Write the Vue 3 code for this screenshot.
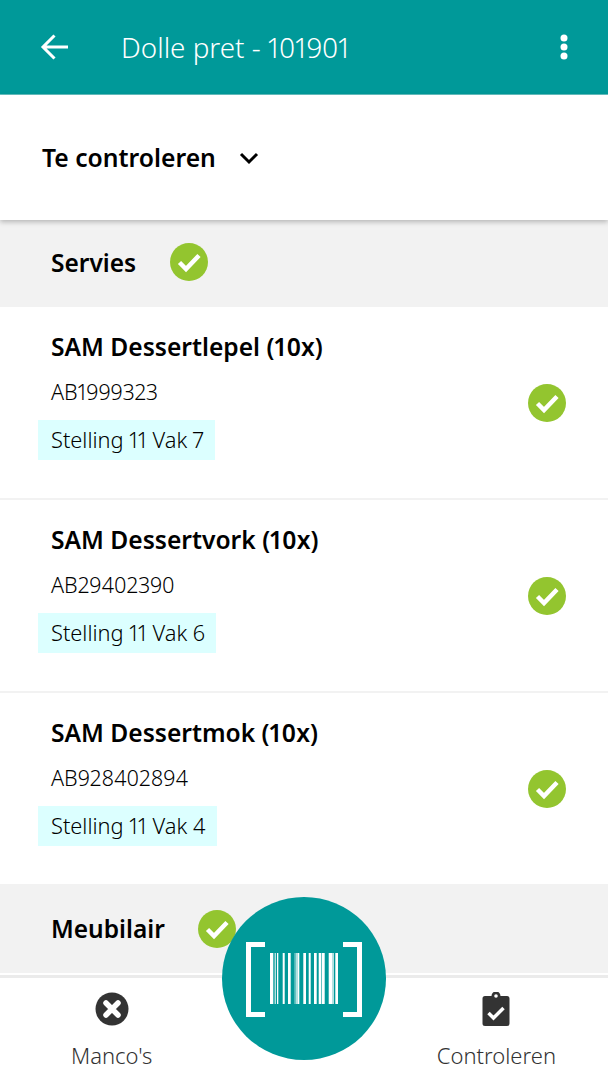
<template>
  <div class="screen">
    <header class="app-bar">
      <svg class="back-icon" width="30" height="30" viewBox="0 0 30 30">
        <path d="M28 15H3M14.500 3.500 3 15l11.500 11.500" fill="none" stroke="#fff" stroke-width="3" />
      </svg>
      <h1 class="app-title">Dolle pret - 101901</h1>
      <svg class="more-icon" width="10" height="26" viewBox="0 0 10 26">
        <circle cx="5" cy="4" r="3.500" fill="#fff" />
        <circle cx="5" cy="13" r="3.500" fill="#fff" />
        <circle cx="5" cy="22" r="3.500" fill="#fff" />
      </svg>
    </header>

    <div class="filter-row">
      <span class="filter-label">Te controleren</span>
      <svg width="20" height="14" viewBox="0 0 20 14">
        <path d="M2 3l8 8 8-8" fill="none" stroke="#000" stroke-width="3" />
      </svg>
    </div>

    <main class="list">
      <div class="section-head">
        <span class="section-title">Servies</span>
        <svg class="check" viewBox="0 0 38 38">
          <circle cx="19" cy="19" r="19" fill="#93c52f" />
          <path d="M9.500 19.500l6.500 6.500 13-13.500" fill="none" stroke="#fff" stroke-width="4.500" />
        </svg>
      </div>

      <div v-for="item in items" :key="item.code" class="item">
        <div class="item-info">
          <div class="item-name">{{ item.name }}</div>
          <div class="item-code">{{ item.code }}</div>
          <div class="item-place">{{ item.place }}</div>
        </div>
        <svg class="check" viewBox="0 0 38 38">
          <circle cx="19" cy="19" r="19" fill="#93c52f" />
          <path d="M9.500 19.500l6.500 6.500 13-13.500" fill="none" stroke="#fff" stroke-width="4.500" />
        </svg>
      </div>

      <div class="section-head section-last">
        <span class="section-title">Meubilair</span>
        <svg class="check" viewBox="0 0 38 38">
          <circle cx="19" cy="19" r="19" fill="#93c52f" />
          <path d="M9.500 19.500l6.500 6.500 13-13.500" fill="none" stroke="#fff" stroke-width="4.500" />
        </svg>
      </div>
    </main>

    <nav class="bottom-nav">
      <div class="nav-item">
        <svg width="34" height="34" viewBox="0 0 34 34">
          <circle cx="17" cy="17" r="16.500" fill="#333" />
          <path d="M11 11l12 12M23 11 11 23" fill="none" stroke="#fff" stroke-width="5.500" stroke-linecap="round" />
        </svg>
        <span>Manco's</span>
      </div>
      <div class="nav-item">
        <svg width="28" height="34" viewBox="0 0 28 34">
          <path d="M3 4h6.500a4.500 4.500 0 0 1 9 0H25a2.500 2.500 0 0 1 2.500 2.500v25A2.500 2.500 0 0 1 25 34H3a2.500 2.500 0 0 1-2.500-2.500v-25A2.500 2.500 0 0 1 3 4z" fill="#333" />
          <circle cx="14" cy="4" r="1.800" fill="#fff" />
          <path d="M6.500 21l5 5 10-10" fill="none" stroke="#fff" stroke-width="3.500" />
        </svg>
        <span>Controleren</span>
      </div>
    </nav>

    <button class="scan-btn" aria-label="Scan">
      <svg width="116" height="76" viewBox="0 0 116 76">
        <path d="M19 2.500H2.500v70H19M97 2.500h16.500v70H97" fill="none" stroke="#fff" stroke-width="5" />
        <rect v-for="(bar, i) in bars" :key="i" :x="bar[0]" y="11" :width="bar[1]" height="51" fill="#fff" />
      </svg>
    </button>
  </div>
</template>

<script setup>
const items = [
  { name: 'SAM Dessertlepel (10x)', code: 'AB1999323', place: 'Stelling 11 Vak 7' },
  { name: 'SAM Dessertvork (10x)', code: 'AB29402390', place: 'Stelling 11 Vak 6' },
  { name: 'SAM Dessertmok (10x)', code: 'AB928402894', place: 'Stelling 11 Vak 4' }
]

// x, width of each barcode stripe
const bars = [
  [24, 3.3], [28.700, 1], [31, 1.300], [36.700, 2], [42, 2.700], [48.700, 0.700], [50, 0.700],
  [51.300, 2], [57.300, 2.700], [62.700, 2], [68, 2.700], [72.700, 2.700], [76, 2.700],
  [82.700, 4], [87.300, 0.700], [89.300, 2.700]
]
</script>

<style scoped>
.screen {
  position: relative;
  display: flex;
  flex-direction: column;
  width: 608px;
  height: 1080px;
  overflow: hidden;
  background: #fff;
  color: #000;
  font-family: "Noto Sans", "Open Sans", sans-serif;
  font-variant-numeric: proportional-nums;
}

.app-bar {
  display: flex;
  align-items: center;
  flex: none;
  height: 94px;
  padding: 0 39px 0 40px;
  background: #009999;
  border-bottom: 1px solid #66c2c2;
  color: #fff;
}

.back-icon {
  flex: none;
  margin-right: 51px;
}

.app-title {
  flex: 1;
  margin: 0;
  font-size: 27.800px;
  font-weight: 300;
}

.more-icon {
  flex: none;
}

.filter-row {
  position: relative;
  z-index: 1;
  display: flex;
  align-items: center;
  gap: 23px;
  flex: none;
  height: 125px;
  padding-left: 42px;
  background: #fff;
  box-shadow: 0 2px 5px rgba(0, 0, 0, 0.25);
}

.filter-label {
  font-size: 24.700px;
  font-weight: 600;
}

.list {
  flex: 1;
  min-height: 0;
  overflow: hidden;
}

.section-head {
  display: flex;
  align-items: center;
  gap: 34px;
  box-sizing: border-box;
  height: 87px;
  padding: 0 0 3px 51px;
  background: #f2f2f2;
}

.section-last {
  gap: 33px;
  height: 89px;
  padding-bottom: 0;
}

.section-title {
  font-size: 24.500px;
  font-weight: 600;
}

.check {
  flex: none;
  width: 38px;
  height: 38px;
}

.item {
  display: flex;
  align-items: center;
  justify-content: space-between;
  box-sizing: border-box;
  height: 193px;
  padding: 0 42.500px 0 51px;
  border-bottom: 2px solid #f2f2f2;
}

.item:nth-last-child(2) {
  height: 191px;
  border-bottom: 0;
}

.item-info {
  align-self: flex-start;
  padding-top: 22px;
}

.item-name {
  font-size: 24.600px;
  font-weight: 600;
  line-height: 36px;
}

.item-code {
  margin-top: 12px;
  font-size: 21.500px;
  font-weight: 300;
  line-height: 30px;
}

.item-place {
  display: inline-block;
  margin: 13px 0 0 -13px;
  padding: 0 11px 0 13px;
  background: #dcffff;
  font-size: 21.800px;
  font-weight: 300;
  line-height: 40px;
}

.bottom-nav {
  display: flex;
  justify-content: space-between;
  flex: none;
  height: 105px;
  box-sizing: border-box;
  border-top: 3px solid #ebebeb;
  padding: 14px 52px 0 71px;
  background: #fff;
}

.nav-item {
  display: flex;
  flex-direction: column;
  align-items: center;
  gap: 14px;
  color: #333;
  font-size: 22px;
  font-weight: 300;
  line-height: 30px;
}

.scan-btn {
  position: absolute;
  left: 222px;
  top: 897px;
  display: flex;
  align-items: center;
  justify-content: center;
  box-sizing: border-box;
  width: 164px;
  height: 163px;
  padding: 3px 0 0;
  border: 0;
  border-radius: 50%;
  background: #009999;
}
</style>
